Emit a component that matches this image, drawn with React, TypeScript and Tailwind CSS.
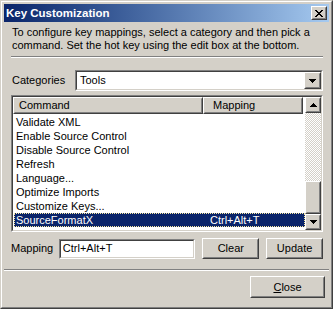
import React from "react";

function Raised({ className, children }: { className: string; children?: React.ReactNode }) {
  return (
    <div className={`border border-white border-r-[#404040] border-b-[#404040] bg-[#d4d0c8] ${className}`}>
      <div className="h-full w-full border border-[#d4d0c8] border-r-[#808080] border-b-[#808080] flex items-center justify-center">
        {children}
      </div>
    </div>
  );
}

function Sunken({ className, children }: { className: string; children?: React.ReactNode }) {
  return (
    <div className={`border border-[#808080] border-r-white border-b-white ${className}`}>
      <div className="h-full w-full border border-[#404040] border-r-[#d4d0c8] border-b-[#d4d0c8] bg-white flex">
        {children}
      </div>
    </div>
  );
}

function Arrow({ up }: { up?: boolean }) {
  return (
    <svg width="7" height="4" viewBox="0 0 7 4" shapeRendering="crispEdges">
      {up ? (
        <path d="M3 0h1v1h1v1h1v1h1v1H0V3h1V2h1V1h1z" fill="#000" />
      ) : (
        <path d="M0 0h7v1H6v1H5v1H4v1H3V3H2V2H1V1H0z" fill="#000" />
      )}
    </svg>
  );
}

export default function App() {
  const rows: [string, string][] = [
    ["Validate XML", ""],
    ["Enable Source Control", ""],
    ["Disable Source Control", ""],
    ["Refresh", ""],
    ["Language...", ""],
    ["Optimize Imports", ""],
    ["Customize Keys...", ""],
    ["SourceFormatX", "Ctrl+Alt+T"],
  ];
  return (
    <div className="w-[333px] h-[309px] bg-[#d4d0c8] border border-[#404040] border-t-[#d4d0c8] border-l-[#d4d0c8] font-['Liberation_Sans',Arial,sans-serif] text-[11px] text-black leading-[13px]">
      <div className="h-full border border-[#808080] border-t-white border-l-white p-[2px] flex flex-col">
        {/* title bar */}
        <div className="h-[18px] flex items-center bg-gradient-to-r from-[#0a246a] to-[#a6caf0] pl-[2px] pr-[2px] shrink-0">
          <span className="text-white font-bold text-[11.5px] flex-1 leading-[13px]">Key Customization</span>
          <Raised className="w-[16px] h-[14px]">
            <svg width="8" height="7" viewBox="0 0 8 7" shapeRendering="crispEdges">
              <path
                d="M0 0h2v1h1v1h2V1h1V0h2v1H7v1H6v1H5v1h1v1h1v1h1v1H6V6H5V5H3v1H2v1H0V6h1V5h1V4h1V3H2V2H1V1H0z"
                fill="#000"
              />
            </svg>
          </Raised>
        </div>

        {/* description */}
        <div className="mt-[4px] pl-[8px] pr-[6px]">
          <p>To configure key mappings, select a category and then pick a</p>
          <p>command. Set the hot key using the edit box at the bottom.</p>
        </div>

        <div className="mt-[4px] ml-[7px] mr-[6px] h-[2px] border-t border-[#808080] border-b border-b-white" />

        {/* categories */}
        <div className="mt-[12px] ml-[7px] mr-[6px] flex items-center">
          <span className="w-[64px] pl-[1px]">Categories</span>
          <Sunken className="flex-1 h-[21px]">
            <div className="flex-1 flex items-center pl-[3px]">Tools</div>
            <Raised className="w-[17px] h-[17px]">
              <Arrow />
            </Raised>
          </Sunken>
        </div>

        {/* list */}
        <Sunken className="mt-[4px] ml-[7px] mr-[6px] h-[137px]">
          <div className="flex-1 flex flex-col">
            <div className="flex h-[17px] shrink-0">
              <Raised className="w-[190px] h-[17px]">
                <span className="w-full pl-[4px]">Command</span>
              </Raised>
              <Raised className="w-[100px] h-[17px]">
                <span className="w-full pl-[8px]">Mapping</span>
              </Raised>
            </div>
            <div className="flex flex-col pl-[1px] pt-[1px]">
              {rows.map(([c, m], i) => {
                const sel = i === rows.length - 1;
                return (
                  <div
                    key={c}
                    className={
                      sel
                        ? "h-[14px] flex items-center bg-[#0a246a] text-white outline outline-1 outline-dotted outline-offset-[-1px] outline-[#f8e8a0]"
                        : "h-[14px] flex items-center"
                    }
                  >
                    <span className="w-[196px] pl-[2px]">{c}</span>
                    <span>{m}</span>
                  </div>
                );
              })}
            </div>
          </div>
          {/* scrollbar */}
          <div className="w-[16px] flex flex-col shrink-0">
            <Raised className="w-[16px] h-[16px]">
              <Arrow up />
            </Raised>
            <div className="flex-1 bg-[repeating-conic-gradient(#d4d0c8_0_25%,#ffffff_0_50%)] bg-[length:2px_2px]" />
            <Raised className="w-[16px] h-[33px]" />
            <Raised className="w-[16px] h-[16px]">
              <Arrow />
            </Raised>
          </div>
        </Sunken>

        {/* mapping row */}
        <div className="mt-[6px] ml-[7px] mr-[6px] flex items-center">
          <span className="w-[48px]">Mapping</span>
          <Sunken className="w-[137px] h-[20px]">
            <div className="flex items-center pl-[2px]">Ctrl+Alt+T</div>
          </Sunken>
          <Raised className="ml-[7px] w-[57px] h-[21px]">Clear</Raised>
          <Raised className="ml-[7px] w-[57px] h-[21px]">Update</Raised>
        </div>

        <div className="mt-[10px] h-[2px] border-t border-[#808080] border-b border-b-white" />

        <div className="flex justify-end mt-[5px] pr-[4px]">
          <Raised className="w-[75px] h-[22px]">
            <span>
              <span className="underline">C</span>lose
            </span>
          </Raised>
        </div>
      </div>
    </div>
  );
}
